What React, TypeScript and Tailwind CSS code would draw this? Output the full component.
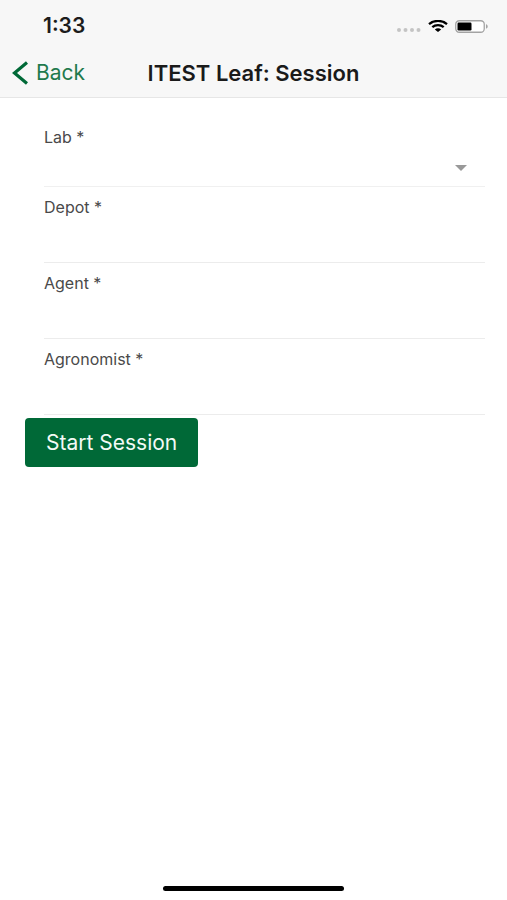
import React from 'react';

interface Field {
  id: string;
  label: string;
}

const textFields: Field[] = [
  { id: 'depot', label: 'Depot *' },
  { id: 'agent', label: 'Agent *' },
  { id: 'agronomist', label: 'Agronomist *' },
];

const StatusBar: React.FC = () => (
  <div className="flex h-[52px] items-center justify-between pl-[43px] pr-[19px]">
    <span className="text-[21px] font-semibold text-[#1c1c1c]">1:33</span>
    <div className="flex items-center gap-[7px]">
      <svg className="mt-2 h-1 w-6" viewBox="0 0 24 4" fill="#c4c4c4">
        <circle cx="2" cy="2" r="2" />
        <circle cx="8.5" cy="2" r="2" />
        <circle cx="15" cy="2" r="2" />
        <circle cx="21.5" cy="2" r="2" />
      </svg>
      <svg className="h-3 w-5" viewBox="0 0 20 12" fill="none" stroke="#000" strokeWidth="2.3">
        <path d="M1 4.1C6 -.1 14 -.1 19 4.1" />
        <path d="M4.3 7.1C7.5 4.4 12.5 4.4 15.7 7.1" />
        <path d="M10 12 6.8 9.4C8.6 7.9 11.4 7.9 13.2 9.4Z" fill="#000" stroke="none" />
      </svg>
      <svg className="h-[13px] w-[33px]" viewBox="0 0 33 13">
        <rect x="0.75" y="0.75" width="28.5" height="11.5" rx="3.5" fill="#fff" stroke="#a3a3a3" strokeWidth="1.3" />
        <rect x="2.5" y="2.5" width="14" height="8" rx="1.2" fill="#000" />
        <path d="M31 4.3C33.3 5 33.3 8 31 8.7Z" fill="#a3a3a3" />
      </svg>
    </div>
  </div>
);

const NavBar: React.FC = () => (
  <div className="grid h-[45px] grid-cols-[1fr_auto_1fr] items-center px-3 pb-[3px]">
    <button type="button" className="flex items-center gap-2 text-[21px] text-[#1f7a4d]">
      <svg className="h-6 w-4" viewBox="0 0 16 24" fill="none" stroke="#006937" strokeWidth="3.2">
        <path d="M15 1.5 2.5 12 15 22.5" />
      </svg>
      Back
    </button>
    <h1 className="text-[22px] font-semibold text-[#1a1a1a]">ITEST Leaf: Session</h1>
  </div>
);

export default function App() {
  return (
    <div className="flex min-h-screen flex-col bg-white font-['Inter',sans-serif]">
      <header className="border-b border-[#e6e6e6] bg-[#f7f7f7]">
        <StatusBar />
        <NavBar />
      </header>

      <form className="flex-1 pt-[29px]" onSubmit={(e) => e.preventDefault()}>
        <div className="ml-11 mr-[22px]">
          <div className="border-b border-[#f0f0f0]">
            <label htmlFor="lab" className="block text-base/5 text-[#4a4a4a]">Lab *</label>
            <div className="relative">
              <select id="lab" className="block h-[39px] w-full appearance-none bg-transparent text-base outline-none" />
              <svg className="pointer-events-none absolute right-[18px] top-[18px] h-1.5 w-3" viewBox="0 0 12 6" fill="#999">
                <path d="M0 0H12L6 6Z" />
              </svg>
            </div>
          </div>

          {textFields.map((field) => (
            <div key={field.id} className="border-b border-[#ececec] pt-2.5">
              <label htmlFor={field.id} className="block text-base/5 text-[#4a4a4a]">{field.label}</label>
              <input id={field.id} type="text" className="block h-[45px] w-full bg-transparent text-base outline-none" />
            </div>
          ))}
        </div>

        <button
          type="submit"
          className="ml-[25px] mt-[3px] h-[49px] rounded bg-[#006937] px-[21px] text-[21px] text-[#f4faf6]"
        >
          Start Session
        </button>
      </form>

      <div className="flex justify-center pb-[9px]">
        <div className="h-[5px] w-[181px] rounded-full bg-black" />
      </div>
    </div>
  );
}
